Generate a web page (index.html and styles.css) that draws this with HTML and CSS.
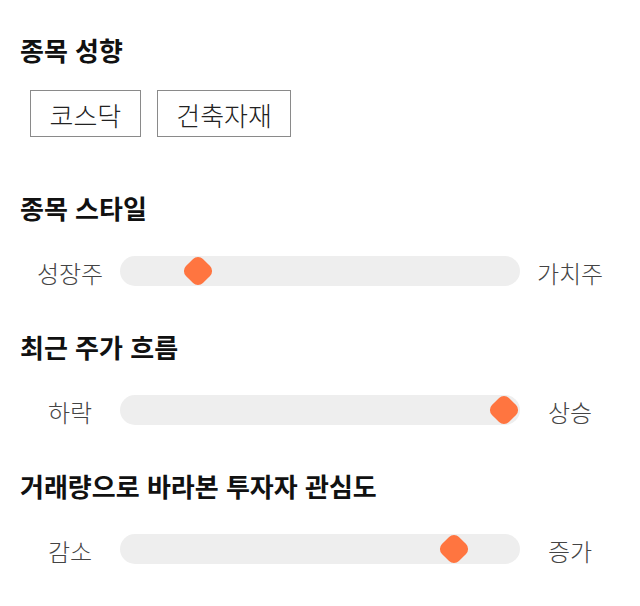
FILE: index.html
```html
<!DOCTYPE html>
<html lang="ko">
<head>
<meta charset="utf-8">
<link rel="stylesheet" href="styles.css">
</head>
<body>
<div class="page">
  <section class="sec sec-first">
    <h2 class="title">종목 성향</h2>
    <div class="tags">
      <span class="tag">코스닥</span>
      <span class="tag">건축자재</span>
    </div>
  </section>
  <section class="sec">
    <h2 class="title">종목 스타일</h2>
    <div class="slider">
      <span class="lbl">성장주</span>
      <div class="track"><span class="thumb" style="left: 19.5%"></span></div>
      <span class="lbl">가치주</span>
    </div>
  </section>
  <section class="sec">
    <h2 class="title">최근 주가 흐름</h2>
    <div class="slider">
      <span class="lbl">하락</span>
      <div class="track"><span class="thumb" style="left: 96.1%"></span></div>
      <span class="lbl">상승</span>
    </div>
  </section>
  <section class="sec">
    <h2 class="title">거래량으로 바라본 투자자 관심도</h2>
    <div class="slider">
      <span class="lbl">감소</span>
      <div class="track"><span class="thumb" style="left: 83.4%"></span></div>
      <span class="lbl">증가</span>
    </div>
  </section>
</div>
</body>
</html>
```
FILE: styles.css
```css
html, body {
  margin: 0;
  padding: 0;
  background: #ffffff;
}
body {
  font-family: "Noto Sans CJK KR", "Noto Sans", sans-serif;
  color: #111;
}
.page {
  padding: 32px 20px 0 20px;
}
.sec {
  margin-top: 53px;
}
.sec-first {
  margin-top: 0;
}
.sec + .sec + .sec {
  margin-top: 43px;
}
.title {
  margin: 0;
  font-size: 26px;
  font-weight: 700;
  line-height: 36px;
  height: 36px;
  color: #111;
  white-space: nowrap;
}
.tags {
  display: flex;
  gap: 16px;
  margin-top: 22px;
  padding-left: 10px;
}
.tag {
  box-sizing: border-box;
  display: inline-flex;
  align-items: center;
  justify-content: center;
  height: 47px;
  padding: 2px 18.5px 0 18.5px;
  border: 1px solid #8a8a8a;
  font-size: 26px;
  font-weight: 300;
  color: #222;
  line-height: 1;
}
.slider {
  display: flex;
  align-items: center;
  margin-top: 30px;
  height: 30px;
}
.lbl {
  width: 100px;
  text-align: center;
  font-size: 24px;
  font-weight: 300;
  color: #444;
  line-height: 30px;
  padding-top: 4px;
  white-space: nowrap;
}
.track {
  position: relative;
  flex: 1;
  height: 30px;
  background: #eeeeee;
  border-radius: 15px;
}
.thumb {
  position: absolute;
  top: 50%;
  width: 24px;
  height: 24px;
  background: #ff7540;
  border-radius: 7px;
  transform: translate(-50%, -50%) rotate(45deg);
}
```
